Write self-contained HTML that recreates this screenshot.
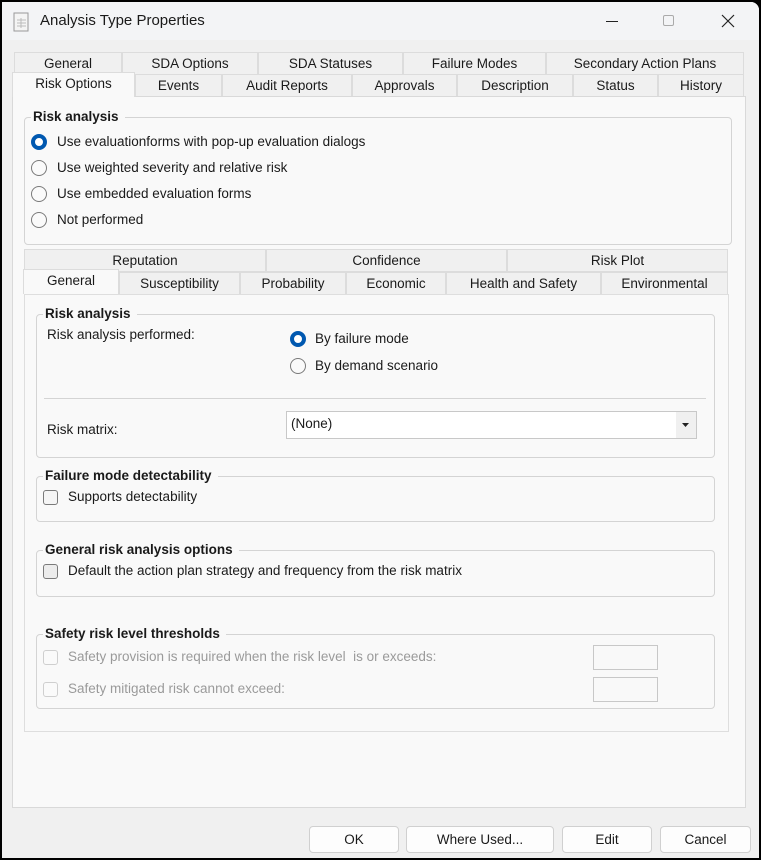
<!DOCTYPE html>
<html><head><style>
*{box-sizing:border-box;margin:0;padding:0}
body{width:761px;height:860px;background:#000;position:relative;overflow:hidden;font-family:"Liberation Sans",sans-serif;font-size:13.5px;color:#1a1a1a}
.win{position:absolute;left:2px;top:2px;width:757px;height:856px;background:#f0f0f0;border-top-right-radius:8px;overflow:hidden}
.title{position:absolute;left:0;top:0;width:757px;height:38px;background:#f3f4f6}
.a{position:absolute;white-space:nowrap}
.tab{position:absolute;height:23px;border:1px solid #dcdcdc;background:#f0f0f0;text-align:center;line-height:21px}
.sel{background:#f9f9f9;border-bottom:none;z-index:2}
.page{position:absolute;background:#f9f9f9;border:1px solid #d9d9d9}
.grp{position:absolute;border:1px solid #d4d4d4;border-radius:4px}
.gt{position:absolute;font-weight:bold;background:#f9f9f9;padding:0 6px 0 2px;line-height:16px;white-space:nowrap}
.rad{position:absolute;width:16px;height:16px;border-radius:50%;border:1px solid #7a7a7a;background:#fafafa}
.rad.on{border:4.5px solid #0058b0;background:#fff}
.cb{position:absolute;width:15px;height:15px;border-radius:3px;border:1px solid #7a7a7a;background:#f5f5f5}
.cb.dis{border-color:#cfcfcf;background:#fafafa}
.dis{color:#9a9a9a}
.btn{position:absolute;top:824px;height:27px;border:1px solid #d0d0d0;border-radius:4px;background:#fdfdfd;text-align:center;line-height:25px}
</style></head><body>
<div class="win">
<div class="title">
<svg class="a" style="left:11px;top:10px" width="18" height="20"><rect x="1" y="1" width="14" height="18" fill="#f4f4f4" stroke="#999"/><g stroke="#bbb"><line x1="4" y1="8" x2="13" y2="8"/><line x1="4" y1="11" x2="13" y2="11"/><line x1="4" y1="14" x2="13" y2="14"/><line x1="8" y1="6" x2="8" y2="16"/></g></svg>
<div class="a" style="left:38px;top:10px;font-size:15px">Analysis Type Properties</div>
<div class="a" style="left:604px;top:19px;width:12px;height:1px;background:#222"></div>
<div class="a" style="left:661px;top:13px;width:11px;height:11px;border:1px solid #aaa;border-radius:2px"></div>
<svg class="a" style="left:719px;top:12px" width="14" height="14"><path d="M1 1L13 13M13 1L1 13" stroke="#222" stroke-width="1.2"/></svg>
</div>

<div class="tab" style="left:12px;top:50px;width:108px">General</div>
<div class="tab" style="left:120px;top:50px;width:136px">SDA Options</div>
<div class="tab" style="left:256px;top:50px;width:145px">SDA Statuses</div>
<div class="tab" style="left:401px;top:50px;width:143px">Failure Modes</div>
<div class="tab" style="left:544px;top:50px;width:198px">Secondary Action Plans</div>
<div class="tab sel" style="left:10px;top:70px;width:123px;height:25px">Risk Options</div>
<div class="tab" style="left:133px;top:72px;width:87px">Events</div>
<div class="tab" style="left:220px;top:72px;width:130px">Audit Reports</div>
<div class="tab" style="left:350px;top:72px;width:105px">Approvals</div>
<div class="tab" style="left:455px;top:72px;width:116px">Description</div>
<div class="tab" style="left:571px;top:72px;width:85px">Status</div>
<div class="tab" style="left:656px;top:72px;width:86px">History</div>

<div class="page" style="left:10px;top:94px;width:734px;height:712px">
<div class="grp" style="left:11px;top:20px;width:708px;height:128px"></div>
<div class="gt" style="left:18px;top:12px">Risk analysis</div>
<div class="rad on" style="left:18px;top:37px"></div><div class="a" style="left:44px;top:37px">Use evaluationforms with pop-up evaluation dialogs</div>
<div class="rad" style="left:18px;top:63px"></div><div class="a" style="left:44px;top:63px">Use weighted severity and relative risk</div>
<div class="rad" style="left:18px;top:89px"></div><div class="a" style="left:44px;top:89px">Use embedded evaluation forms</div>
<div class="rad" style="left:18px;top:115px"></div><div class="a" style="left:44px;top:115px">Not performed</div>

<div class="tab" style="left:11px;top:152px;width:242px">Reputation</div>
<div class="tab" style="left:253px;top:152px;width:241px">Confidence</div>
<div class="tab" style="left:494px;top:152px;width:221px">Risk Plot</div>
<div class="tab sel" style="left:10px;top:172px;width:96px;height:25px">General</div>
<div class="tab" style="left:106px;top:175px;width:121px">Susceptibility</div>
<div class="tab" style="left:227px;top:175px;width:106px">Probability</div>
<div class="tab" style="left:333px;top:175px;width:100px">Economic</div>
<div class="tab" style="left:433px;top:175px;width:155px">Health and Safety</div>
<div class="tab" style="left:588px;top:175px;width:127px">Environmental</div>
<div class="page" style="left:11px;top:197px;width:705px;height:438px;border-color:#dedede">
 <div class="grp" style="left:11px;top:19px;width:679px;height:144px"></div>
 <div class="gt" style="left:18px;top:11px">Risk analysis</div>
 <div class="a" style="left:22px;top:32px">Risk analysis performed:</div>
 <div class="rad on" style="left:265px;top:36px"></div><div class="a" style="left:290px;top:36px">By failure mode</div>
 <div class="rad" style="left:265px;top:63px"></div><div class="a" style="left:290px;top:63px">By demand scenario</div>
 <div class="a" style="left:19px;top:103px;width:662px;height:1px;background:#d4d4d4"></div>
 <div class="a" style="left:22px;top:127px">Risk matrix:</div>
 <div class="a" style="left:261px;top:116px;width:411px;height:28px;border:1px solid #c8c8c8;background:#fff;padding:4px 4px">(None)</div>
 <div class="a" style="left:651px;top:117px;width:20px;height:26px;background:#f0f0f0"></div>
 <svg class="a" style="left:657px;top:128px" width="8" height="5"><path d="M0 0H7L3.5 4Z" fill="#222"/></svg>

 <div class="grp" style="left:11px;top:181px;width:679px;height:46px"></div>
 <div class="gt" style="left:18px;top:173px">Failure mode detectability</div>
 <div class="cb" style="left:18px;top:195px"></div><div class="a" style="left:43px;top:194px">Supports detectability</div>

 <div class="grp" style="left:11px;top:255px;width:679px;height:47px"></div>
 <div class="gt" style="left:18px;top:247px">General risk analysis options</div>
 <div class="cb" style="left:18px;top:269px;background:#ececec"></div><div class="a" style="left:43px;top:268px">Default the action plan strategy and frequency from the risk matrix</div>

 <div class="grp" style="left:11px;top:339px;width:679px;height:75px"></div>
 <div class="gt" style="left:18px;top:331px">Safety risk level thresholds</div>
 <div class="cb dis" style="left:18px;top:355px"></div><div class="a dis" style="left:43px;top:354px">Safety provision is required when the risk level &nbsp;is or exceeds:</div>
 <div class="cb dis" style="left:18px;top:387px"></div><div class="a dis" style="left:43px;top:386px">Safety mitigated risk cannot exceed:</div>
 <div class="a" style="left:568px;top:350px;width:65px;height:25px;border:1px solid #c8c8c8"></div>
 <div class="a" style="left:568px;top:382px;width:65px;height:25px;border:1px solid #c8c8c8"></div>
</div>
</div>

<div class="btn" style="left:307px;width:90px">OK</div>
<div class="btn" style="left:404px;width:148px">Where Used...</div>
<div class="btn" style="left:560px;width:90px">Edit</div>
<div class="btn" style="left:658px;width:91px">Cancel</div>
</div>
</body></html>
